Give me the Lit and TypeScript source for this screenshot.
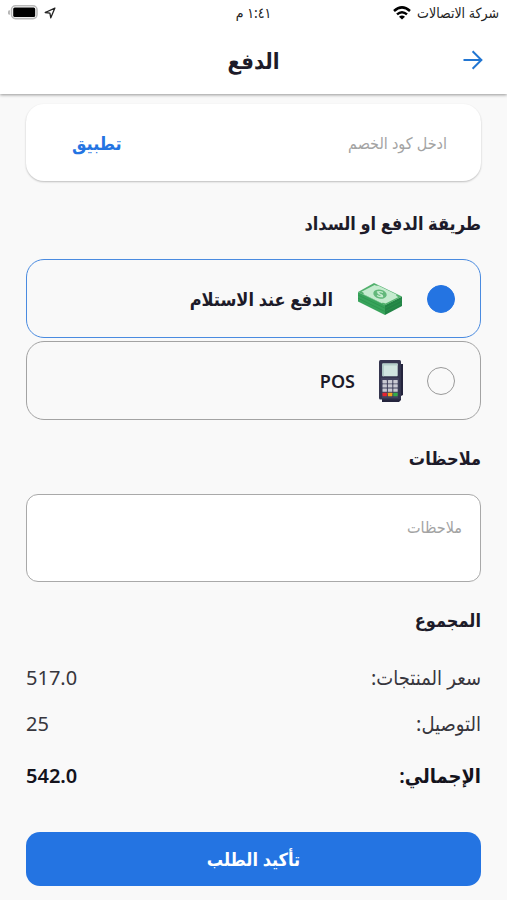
import { LitElement, html, css, svg } from "lit";
import { customElement, state } from "lit/decorators.js";

const batteryIcon = html`<svg width="30" height="16" viewBox="0 0 30 16" aria-hidden="true">
  <rect x="3.5" y="0.8" width="25.5" height="12.8" rx="4" fill="#fff" stroke="#b9b9b9" stroke-width="1.6" />
  <rect x="5.2" y="2.6" width="22" height="9.4" rx="1.5" fill="#000" />
  <path d="M1.2 5.5Q0 7.5 1.2 9.5Z" fill="#aaa" stroke="#aaa" />
</svg>`;

const locationIcon = html`<svg width="12" height="12" viewBox="0 0 12 12" aria-hidden="true">
  <path d="M10.9 1.1L1.2 5.5L5.9 6.1L6.8 10.8Z" fill="none" stroke="#222" stroke-width="1.3" stroke-linejoin="round" />
</svg>`;

const wifiIcon = html`<svg width="18" height="14" viewBox="0 0 18 14" aria-hidden="true">
  <g fill="none" stroke="#000" stroke-width="2.5">
    <path d="M1 5Q9 -2.2 17 5" />
    <path d="M4 8.4Q9 4 14 8.4" />
  </g>
  <path d="M9 13.6L6 10.7Q9 8.2 12 10.7Z" />
</svg>`;

const arrowIcon = html`<svg width="20" height="20" viewBox="0 0 20 20" aria-hidden="true">
  <path d="M0.5 10H18.5M9.6 1.2L18.4 10L9.6 18.8" fill="none" stroke="#2276d2" stroke-width="2" />
</svg>`;

const cashIcon = html`<svg width="46" height="34" viewBox="0 0 46 34" aria-hidden="true">
  <path d="M1 10L28 23V33L1 19.5Z" fill="#38a35b" />
  <path d="M28 23L45 14.5V24L28 33Z" fill="#238446" />
  <path d="M17 1L45 14.5L28 23.5L1 10Z" fill="#52b06d" />
  <path d="M17.5 3Q19.5 4.2 21 3.6L39.5 12.6Q38.5 14.2 41.5 15L28.5 21.5Q26.5 20.4 24.5 21L6.5 12.2Q7.5 10.6 4.5 9.8Z" fill="#c5ebcf" />
  <ellipse cx="23" cy="12.2" rx="6.8" ry="4.5" fill="#62b87a" transform="rotate(12 23 12.2)" />
  <path d="M26 10.5Q22 8.8 21 10.5Q20.5 12 24 12.5Q26.5 13.5 24.8 14.6Q22.5 15 20 13.5M20 9.5L26 15" fill="none" stroke="#c5ebcf" stroke-width="1.2" />
  <path d="M1 13L28 26.2L45 17.6M1 16.2L28 29.6L45 21" fill="none" stroke="#2a944c" stroke-width="0.7" />
</svg>`;

const actionColors = ["#e6242f", "#f0a51c", "#35ab49"];

const posIcon = html`<svg width="24" height="42" viewBox="0 0 24 42" aria-hidden="true">
  <path d="M19 4H24V35L22 36V40L20 42H3V38Z" fill="#24243d" />
  <rect x="0" y="0" width="22" height="39.5" rx="1.5" fill="#35364f" />
  <path d="M2 18H20L19 38H3Z" fill="#41425d" />
  <rect x="3.3" y="3.6" width="15.4" height="12.6" rx="0.8" fill="#d0e5df" />
  <path d="M3.3 3.6H18.7V5.4H5V16.2H3.3Z" fill="#b3cfc9" />
  ${[0, 1, 2].map((row) =>
    [0, 1, 2].map(
      (col) => svg`<rect x=${3.5 + col * 5.4} y=${20 + row * 4.2} width="4.4" height="3.4" rx="0.4" fill="#c9c9d2" />`
    )
  )}
  ${actionColors.map((c, i) => svg`<rect x=${3.5 + i * 5.4} y="32.8" width="4.4" height="3.4" rx="0.4" fill=${c} />`)}
</svg>`;

const methods = [
  { id: "cash", label: "الدفع عند الاستلام", icon: cashIcon },
  { id: "pos", label: "POS", icon: posIcon },
];

@customElement("app-root")
export class AppRoot extends LitElement {
  @state() private method = "cash";

  static styles = css`
    :host {
      display: block;
      min-height: 100vh;
      background: #f9f9f9;
      color: #1d1b29;
      font-family: "Noto Sans", "DejaVu Sans Condensed", "DejaVu Sans", sans-serif;
      font-size: 18px;
      line-height: 32px;
    }
    * {
      box-sizing: border-box;
    }
    svg {
      display: block;
      flex: none;
    }
    button,
    input,
    textarea {
      margin: 0;
      font: inherit;
    }
    .top {
      background: #fff;
      box-shadow: 0 1px 3px rgba(0, 0, 0, 0.4);
    }
    .status {
      display: grid;
      grid-template-columns: 1fr auto 1fr;
      align-items: center;
      height: 26px;
      padding: 0 8px;
      font-size: 14px;
      line-height: 26px;
      color: #222;
    }
    .group {
      display: flex;
      align-items: center;
      gap: 6px;
    }
    .end {
      justify-content: flex-end;
    }
    .bar {
      display: grid;
      grid-template-columns: 48px 1fr 48px;
      align-items: center;
      height: 68px;
      padding: 0 10px;
    }
    .back {
      display: grid;
      place-items: center;
      height: 48px;
      padding: 0;
      border: 0;
      background: none;
    }
    h1,
    h2 {
      margin: 0;
      font-weight: 600;
    }
    h1 {
      font-size: 22px;
      text-align: center;
    }
    h2 {
      font-size: 18px;
      line-height: 32px;
    }
    .content {
      padding: 10px 26px 14px;
    }
    .coupon {
      display: flex;
      align-items: center;
      height: 77px;
      margin-bottom: 26px;
      padding: 0 34px;
      border-radius: 18px;
      background: #fff;
      box-shadow: 0 1px 2px rgba(0, 0, 0, 0.24);
    }
    .code {
      flex: 1;
      min-width: 0;
      padding: 0;
      border: 0;
      background: none;
      font-size: 16px;
    }
    ::placeholder {
      color: #a3a3a3;
      opacity: 1;
    }
    .apply {
      padding: 0 12px;
      border: 0;
      background: none;
      color: #2474e2;
      font-weight: 600;
    }
    .methods {
      display: grid;
      gap: 3px;
      margin: 20px 0 22px;
      padding: 0;
      border: 0;
    }
    .option {
      display: flex;
      align-items: center;
      gap: 24px;
      height: 79px;
      padding: 0 25px;
      border: 1px solid #a3a3a3;
      border-radius: 18px;
      font-weight: 600;
    }
    .option.chosen {
      border-color: #4a8be0;
    }
    .radio {
      appearance: none;
      width: 28px;
      height: 28px;
      border: 1px solid #999;
      border-radius: 50%;
    }
    .radio:checked {
      border-color: #2474e2;
      background: #2474e2;
    }
    .notes {
      display: block;
      width: 100%;
      height: 88px;
      margin: 20px 0 22px;
      padding: 16px 18px;
      border: 1px solid #a9a9a9;
      border-radius: 12px;
      background: #fff;
      font-size: 16px;
      resize: none;
    }
    .totals {
      margin: 26px 0 40px;
    }
    .row {
      display: flex;
      justify-content: space-between;
      margin-bottom: 14px;
      color: #37363d;
      font-size: 20px;
    }
    .row dd {
      margin: 0;
    }
    .grand {
      margin: 20px 0 0;
      color: #14131c;
      font-weight: 600;
    }
    .confirm {
      display: block;
      width: 100%;
      height: 54px;
      border: 0;
      border-radius: 14px;
      background: #2474e2;
      color: #fff;
      font-weight: 600;
    }
  `;

  render() {
    return html`
      <div dir="rtl" lang="ar">
        <header class="top">
          <div class="status">
            <div class="group"><span>شركة الاتصالات</span>${wifiIcon}</div>
            <span>١:٤١ م</span>
            <div class="group end">${locationIcon}${batteryIcon}</div>
          </div>
          <div class="bar">
            <button class="back" type="button" aria-label="رجوع">${arrowIcon}</button>
            <h1>الدفع</h1>
          </div>
        </header>
        <main class="content">
          <div class="coupon">
            <input class="code" type="text" placeholder="ادخل كود الخصم" aria-label="ادخل كود الخصم" />
            <button class="apply" type="button">تطبيق</button>
          </div>
          <h2 id="method-title">طريقة الدفع او السداد</h2>
          <fieldset class="methods" aria-labelledby="method-title">
            ${methods.map(
              (m) => html`<label class="option ${m.id === this.method ? "chosen" : ""}">
                <input
                  class="radio"
                  type="radio"
                  name="method"
                  .value=${m.id}
                  .checked=${m.id === this.method}
                  @change=${() => (this.method = m.id)}
                />
                ${m.icon}
                <span>${m.label}</span>
              </label>`
            )}
          </fieldset>
          <h2><label for="notes">ملاحظات</label></h2>
          <textarea class="notes" id="notes" placeholder="ملاحظات"></textarea>
          <h2>المجموع</h2>
          <dl class="totals">
            <div class="row"><dt>سعر المنتجات:</dt><dd>517.0</dd></div>
            <div class="row"><dt>التوصيل:</dt><dd>25</dd></div>
            <div class="row grand"><dt>الإجمالي:</dt><dd>542.0</dd></div>
          </dl>
          <button class="confirm" type="button">تأكيد الطلب</button>
        </main>
      </div>
    `;
  }
}
